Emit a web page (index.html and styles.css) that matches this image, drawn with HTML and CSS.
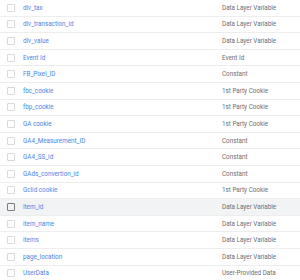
FILE: index.html
```html
<!DOCTYPE html>
<html lang="en">

<head>
    <meta charset="UTF-8">
    <meta name="viewport" content="width=device-width, initial-scale=1.0">
    <title>Variables</title>
    <link rel="stylesheet" href="styles.css">
</head>

<body>

    <div class="var-list">
        <div class="var-row"><span class="check"></span><a class="var-name">dlv_tax</a><span class="var-type">Data Layer Variable</span></div>
        <div class="var-row"><span class="check"></span><a class="var-name">dlv_transaction_id</a><span class="var-type">Data Layer Variable</span></div>
        <div class="var-row"><span class="check"></span><a class="var-name">dlv_value</a><span class="var-type">Data Layer Variable</span></div>
        <div class="var-row"><span class="check"></span><a class="var-name">Event Id</a><span class="var-type">Event Id</span></div>
        <div class="var-row"><span class="check"></span><a class="var-name">FB_Pixel_ID</a><span class="var-type">Constant</span></div>
        <div class="var-row"><span class="check"></span><a class="var-name">fbc_cookie</a><span class="var-type">1st Party Cookie</span></div>
        <div class="var-row"><span class="check"></span><a class="var-name">fbp_cookie</a><span class="var-type">1st Party Cookie</span></div>
        <div class="var-row"><span class="check"></span><a class="var-name">GA cookie</a><span class="var-type">1st Party Cookie</span></div>
        <div class="var-row"><span class="check"></span><a class="var-name">GA4_Measurement_ID</a><span class="var-type">Constant</span></div>
        <div class="var-row"><span class="check"></span><a class="var-name">GA4_SS_id</a><span class="var-type">Constant</span></div>
        <div class="var-row"><span class="check"></span><a class="var-name">GAds_convertion_id</a><span class="var-type">Constant</span></div>
        <div class="var-row"><span class="check"></span><a class="var-name">Gclid cookie</a><span class="var-type">1st Party Cookie</span></div>
        <div class="var-row hover"><span class="check"></span><a class="var-name">item_id</a><span class="var-type">Data Layer Variable</span></div>
        <div class="var-row"><span class="check"></span><a class="var-name">item_name</a><span class="var-type">Data Layer Variable</span></div>
        <div class="var-row"><span class="check"></span><a class="var-name">items</a><span class="var-type">Data Layer Variable</span></div>
        <div class="var-row"><span class="check"></span><a class="var-name">page_location</a><span class="var-type">Data Layer Variable</span></div>
        <div class="var-row"><span class="check"></span><a class="var-name">UserData</a><span class="var-type">User-Provided Data</span></div>
    </div>

</body>

</html>
```

FILE: styles.css
```css
body {
    font-family: Roboto, Arial, sans-serif;
    background-color: #ffffff;
    margin: 0;
    overflow: hidden;
}

.var-list {
    display: flex;
    flex-direction: column;
}

.var-row {
    display: grid;
    grid-template-columns: 23px 199px 1fr;
    align-items: center;
    height: 16.6px;
    box-sizing: border-box;
    border-bottom: 1px solid #ededed;
    font-size: 6.3px;
}

.var-row.hover {
    background-color: #f1f3f4;
}

.check {
    width: 8px;
    height: 8px;
    box-sizing: border-box;
    margin-left: 7px;
    border: 1px solid #d9d9d9;
    border-radius: 1px;
}

.var-row.hover .check {
    border-color: #7a7a7a;
}

.var-name {
    color: #4a84e4;
    cursor: pointer;
}

.var-type {
    color: #6a6e72;
}
```
